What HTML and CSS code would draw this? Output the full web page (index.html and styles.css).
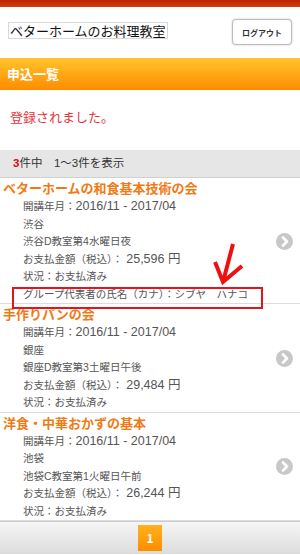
FILE: index.html
```html
<!DOCTYPE html>
<html lang="ja">
<head>
  <meta charset="UTF-8" />
  <title>申込一覧 – ベターホームのお料理教室</title>
  <meta name="viewport" content="width=device-width, initial-scale=1.0" />
  <link rel="stylesheet" href="styles.css">
</head>
<body>

  <div class="topbar"></div>

  <header class="header">
    <h1 class="site-title">ベターホームのお料理教室</h1>
    <button class="logout" type="button">ログアウト</button>
  </header>

  <h2 class="section-title">申込一覧</h2>

  <p class="message">登録されました。</p>

  <div class="count"><span class="count-num">3</span>件中　1〜3件を表示</div>

  <ul class="list">
    <li class="item">
      <div class="item-title">ベターホームの和食基本技術の会</div>
      <div class="row">開講年月：<span class="num">2016/11 - 2017/04</span></div>
      <div class="row">渋谷</div>
      <div class="row">渋谷D教室第4水曜日夜</div>
      <div class="row">お支払金額（税込）：<span class="num"> 25,596 円</span></div>
      <div class="row">状況：お支払済み</div>
      <div class="row">グループ代表者の氏名（カナ）：シブヤ　ハナコ</div>
      <span class="chevron"><svg width="17" height="17" viewBox="0 0 17 17"><path d="M7 4.5 L11 8.5 L7 12.5" fill="none" stroke="#fff" stroke-width="2.6" stroke-linecap="round" stroke-linejoin="round"/></svg></span>
      <!-- annotation -->
      <div class="highlight"></div>
      <svg class="arrow" width="34" height="44" viewBox="0 0 34 44"><path d="M21 2 L11 40 M3 20 L11 40 L30 24" fill="none" stroke="#f01010" stroke-width="4" stroke-linejoin="miter"/></svg>
    </li>
    <li class="item">
      <div class="item-title">手作りパンの会</div>
      <div class="row">開講年月：<span class="num">2016/11 - 2017/04</span></div>
      <div class="row">銀座</div>
      <div class="row">銀座D教室第3土曜日午後</div>
      <div class="row">お支払金額（税込）：<span class="num"> 29,484 円</span></div>
      <div class="row">状況：お支払済み</div>
      <span class="chevron"><svg width="17" height="17" viewBox="0 0 17 17"><path d="M7 4.5 L11 8.5 L7 12.5" fill="none" stroke="#fff" stroke-width="2.6" stroke-linecap="round" stroke-linejoin="round"/></svg></span>
    </li>
    <li class="item">
      <div class="item-title">洋食・中華おかずの基本</div>
      <div class="row">開講年月：<span class="num">2016/11 - 2017/04</span></div>
      <div class="row">池袋</div>
      <div class="row">池袋C教室第1火曜日午前</div>
      <div class="row">お支払金額（税込）：<span class="num"> 26,244 円</span></div>
      <div class="row">状況：お支払済み</div>
      <span class="chevron"><svg width="17" height="17" viewBox="0 0 17 17"><path d="M7 4.5 L11 8.5 L7 12.5" fill="none" stroke="#fff" stroke-width="2.6" stroke-linecap="round" stroke-linejoin="round"/></svg></span>
    </li>
  </ul>

  <div class="pager">
    <span class="page current">1</span>
  </div>

</body>
</html>
```

FILE: styles.css
```css
body {
  margin: 0;
  font-family: "Noto Sans CJK JP", "Noto Sans", sans-serif;
  background: #fff;
  color: #444;
}

.topbar {
  height: 7px;
  background: linear-gradient(#b82400, #d23e0e);
}

.header {
  height: 51px;
  display: flex;
  justify-content: space-between;
  align-items: flex-start;
  padding: 0 8px;
}

.site-title {
  margin: 15px 0 0;
  border: 1px solid #d8d8d8;
  font-size: 13px;
  font-weight: normal;
  line-height: 15px;
  color: #111;
  padding: 0 1px;
}

.logout {
  margin-top: 12px;
  width: 60px;
  height: 26px;
  padding: 0;
  background: #fff;
  border: 1px solid #bbb;
  border-radius: 4px;
  box-shadow: 0 0 2px rgba(0,0,0,0.25);
  font-family: inherit;
  font-size: 8px;
  font-weight: bold;
  color: #333;
}

.section-title {
  margin: 0;
  height: 32px;
  line-height: 32px;
  padding-left: 7px;
  background: linear-gradient(#ffc42c, #ff8c00);
  color: #fff;
  font-size: 13px;
  font-weight: bold;
}

.message {
  margin: 0;
  height: 60px;
  box-sizing: border-box;
  padding: 17px 0 0 10px;
  line-height: 20px;
  font-size: 13px;
  color: #e5353c;
}

.count {
  height: 27px;
  line-height: 27px;
  padding-left: 13px;
  background: #e6e6e6;
  border-bottom: 1px solid #d0d0d0;
  font-family: "Liberation Sans", "Noto Sans CJK JP", sans-serif;
  font-size: 11.5px;
  color: #333;
}

.count-num {
  color: #e60012;
  font-weight: bold;
}

.list {
  list-style: none;
  margin: 0;
  padding: 0;
}

.item {
  position: relative;
  border-bottom: 1px solid #ddd;
}

.item-title {
  padding-left: 3px;
  line-height: 20px;
  font-size: 13px;
  font-weight: bold;
  color: #f07a14;
}

.row {
  padding-left: 23px;
  line-height: 17.5px;
  font-family: "Liberation Sans", "Noto Sans CJK JP", sans-serif;
  font-size: 10.5px;
  color: #555;
}

.num {
  font-size: 12.5px;
}

.chevron {
  position: absolute;
  right: 7px;
  top: 50%;
  margin-top: -8px;
  width: 17px;
  height: 17px;
  border-radius: 50%;
  background: #c8c8c8;
}

.chevron svg {
  display: block;
}

.highlight {
  position: absolute;
  left: 12px;
  top: 109px;
  width: 251px;
  height: 22px;
  box-sizing: border-box;
  border: 2px solid #e3141e;
  z-index: 2;
}

.arrow {
  position: absolute;
  left: 212px;
  top: 64px;
}

.pager {
  height: 33px;
  box-sizing: border-box;
  padding-top: 3px;
  display: flex;
  justify-content: center;
  background: linear-gradient(#f6f6f6, #dcdcdc);
  border-top: 1px solid #ccc;
}

.page {
  width: 24px;
  height: 26px;
  line-height: 26px;
  text-align: center;
  font-size: 12px;
  font-weight: bold;
  color: #fff;
}

.page.current {
  background: linear-gradient(#ffb21e, #ff8c00);
}
```
